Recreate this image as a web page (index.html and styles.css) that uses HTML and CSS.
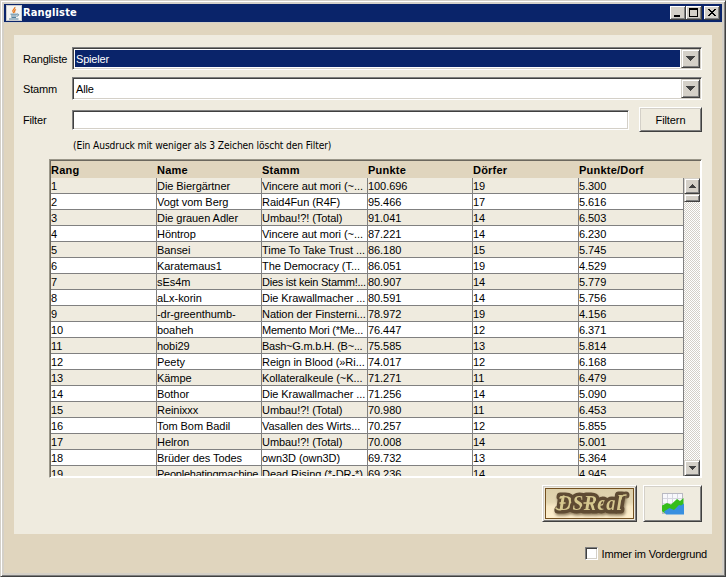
FILE: index.html
```html
<!DOCTYPE html>
<html lang="de">
<head>
<meta charset="utf-8">
<title>Rangliste</title>
<link rel="stylesheet" href="styles.css">
</head>
<body>
<div class="window">
  <header class="titlebar">
    <svg class="java" width="16" height="16" viewBox="0 0 16 16"><rect width="16" height="16" fill="#c9cacd"/><rect x="1" y="1" width="14" height="14" fill="#f4f4f2"/><path d="M8.800 2c.8 2-3 2.800-1.800 4.600L8 8M10 4.500C8.500 5.300 8 6 9 7.500" fill="none" stroke="#e87a22" stroke-width="1.300"/><path d="M4.500 9.200h6.500M5 11h5.500M5.500 12.500h4.500M3 14h9.500M11 9c2.500-.3 2 2-.3 2.200" fill="none" stroke="#52809d"/></svg>
    <h1>Rangliste</h1>
    <div class="controls">
      <button class="ctl"><svg width="16" height="14" shape-rendering="crispEdges"><path d="M4 9h6v2H4z"/></svg></button><button class="ctl"><svg width="16" height="14" shape-rendering="crispEdges"><path d="M3 2h9v9H3zM4 4v6h7V4z" fill-rule="evenodd"/></svg></button><button class="ctl close"><svg width="16" height="14" shape-rendering="crispEdges"><path d="M4 3h2v1h1v1h2V4h1V3h2v1h-1v1h-1v1H9v1h1v1h1v1h1v1h-2V9H9V8H7v1H6v1H4V9h1V8h1V7h1V6H6V5H5V4H4z"/></svg></button>
    </div>
  </header>
  <main class="client">
    <section class="panel">
      <div class="row row-type"><label>Rangliste</label><div class="combo focused"><span>Spieler</span><button class="drop"><svg width="9" height="5" shape-rendering="crispEdges"><path d="M0 0h9v1H8v1H7v1H6v1H5v1H4V4H3V3H2V2H1V1H0z"/></svg></button></div></div>
      <div class="row row-tribe"><label>Stamm</label><div class="combo"><span>Alle</span><button class="drop"><svg width="9" height="5" shape-rendering="crispEdges"><path d="M0 0h9v1H8v1H7v1H6v1H5v1H4V4H3V3H2V2H1V1H0z"/></svg></button></div></div>
      <div class="row row-filter"><label>Filter</label><div class="field"></div><button class="btn filter">Filtern</button></div>
      <p class="hint">(Ein Ausdruck mit weniger als 3 Zeichen löscht den Filter)</p>
      <div class="scrollpane">
        <div class="thead"><b>Rang</b><b>Name</b><b>Stamm</b><b>Punkte</b><b>Dörfer</b><b>Punkte/Dorf</b></div>
        <div class="view">
          <div class="rows">
            <div class="tr"><span>1</span><span>Die Biergärtner</span><span>Vincere aut mori (~...</span><span>100.696</span><span>19</span><span>5.300</span></div>
            <div class="tr"><span>2</span><span>Vogt vom Berg</span><span>Raid4Fun (R4F)</span><span>95.466</span><span>17</span><span>5.616</span></div>
            <div class="tr"><span>3</span><span>Die grauen Adler</span><span>Umbau!?! (Total)</span><span>91.041</span><span>14</span><span>6.503</span></div>
            <div class="tr"><span>4</span><span>Höntrop</span><span>Vincere aut mori (~...</span><span>87.221</span><span>14</span><span>6.230</span></div>
            <div class="tr"><span>5</span><span>Bansei</span><span>Time To Take Trust ...</span><span>86.180</span><span>15</span><span>5.745</span></div>
            <div class="tr"><span>6</span><span>Karatemaus1</span><span>The Democracy (T...</span><span>86.051</span><span>19</span><span>4.529</span></div>
            <div class="tr"><span>7</span><span>sEs4m</span><span class="tight">Dies ist kein Stamm!...</span><span>80.907</span><span>14</span><span>5.779</span></div>
            <div class="tr"><span>8</span><span>aLx-korin</span><span>Die Krawallmacher ...</span><span>80.591</span><span>14</span><span>5.756</span></div>
            <div class="tr"><span>9</span><span>-dr-greenthumb-</span><span>Nation der Finsterni...</span><span>78.972</span><span>19</span><span>4.156</span></div>
            <div class="tr"><span>10</span><span>boaheh</span><span class="tight">Memento Mori (*Me...</span><span>76.447</span><span>12</span><span>6.371</span></div>
            <div class="tr"><span>11</span><span>hobi29</span><span class="tight">Bash~G.m.b.H. (B~...</span><span>75.585</span><span>13</span><span>5.814</span></div>
            <div class="tr"><span>12</span><span>Peety</span><span>Reign in Blood (»Ri...</span><span>74.017</span><span>12</span><span>6.168</span></div>
            <div class="tr"><span>13</span><span>Kämpe</span><span>Kollateralkeule (~K...</span><span>71.271</span><span>11</span><span>6.479</span></div>
            <div class="tr"><span>14</span><span>Bothor</span><span>Die Krawallmacher ...</span><span>71.256</span><span>14</span><span>5.090</span></div>
            <div class="tr"><span>15</span><span>Reinixxx</span><span>Umbau!?! (Total)</span><span>70.980</span><span>11</span><span>6.453</span></div>
            <div class="tr"><span>16</span><span>Tom Bom Badil</span><span>Vasallen des Wirts...</span><span>70.257</span><span>12</span><span>5.855</span></div>
            <div class="tr"><span>17</span><span>Helron</span><span>Umbau!?! (Total)</span><span>70.008</span><span>14</span><span>5.001</span></div>
            <div class="tr"><span>18</span><span>Brüder des Todes</span><span>own3D (own3D)</span><span>69.732</span><span>13</span><span>5.364</span></div>
            <div class="tr"><span>19</span><span class="tight">Peoplehatingmachine</span><span>Dead Rising (*-DR-*)</span><span>69.236</span><span>14</span><span>4.945</span></div>
          </div>
          <div class="scrollbar">
            <button class="arrow up"><svg width="7" height="4" shape-rendering="crispEdges"><path d="M3 0h1v1h1v1h1v1h1v1H0V3h1V2h1V1h1z"/></svg></button>
            <div class="thumb"></div>
            <button class="arrow down"><svg width="7" height="4" shape-rendering="crispEdges"><path d="M0 0h7v1H6v1H5v1H4v1H3V3H2V2H1V1H0z"/></svg></button>
          </div>
        </div>
      </div>
      <div class="actions">
        <button class="btn logo"><svg width="89" height="31" viewBox="0 0 89 31"><defs><linearGradient id="sand" x2="0" y2="1"><stop offset="0" stop-color="#dccfaa"/><stop offset=".45" stop-color="#e4d7b3"/><stop offset=".6" stop-color="#f7e8c5"/><stop offset="1" stop-color="#fff0cf"/></linearGradient></defs><rect x=".5" y=".5" width="88" height="30" fill="url(#sand)" stroke="#74501f"/><path d="M76 11q0-4 5-4" class="swash"/><text class="mark" x="13" y="22" textLength="64" lengthAdjust="spacing">DSReal</text><path d="M76 11q0-4 5-4M11 20q2 3 6 1M15 10l4-2M15 15h5M39 15h8" class="stroke"/></svg></button>
        <button class="btn chart"><svg width="22" height="22" viewBox="0 0 22 22"><rect x=".5" y=".5" width="20" height="20" fill="#f8f8fc" stroke="#b9b9c2"/><path d="M5.500 1v19M10.500 1v19M15.500 1v19M1 5.500h19M1 10.500h19" stroke="#d6d6e0"/><path d="M0 12.500l5-2.500 4 1.500L15 6l3 2 3.500-3v10L2 20l-2-2z" fill="#35bd1b"/><path d="M2 18.500L7.500 15l4.500 2 5-5 2 .5 3-2v11H4z" fill="#388fe0"/></svg></button>
      </div>
    </section>
    <label class="ontop"><i class="check"></i><span>Immer im Vordergrund</span></label>
  </main>
</div>
</body>
</html>
```
FILE: styles.css
```css
* { box-sizing: border-box; }
body { margin: 0; font: 11px/14px "Liberation Sans", Arial, sans-serif; color: #000; }
button { padding: 0; margin: 0; font: inherit; color: inherit; border-radius: 0; }
svg { display: block; }

.window {
  width: 726px; height: 577px; background: #d4d0c8; padding: 3px;
  border: 1px solid; border-color: #d4d0c8 #404040 #404040 #d4d0c8;
  box-shadow: inset 1px 1px #fff, inset -1px -1px #808080;
}
.titlebar { height: 18px; background: #0a246a; display: flex; align-items: center; padding: 0 2px; }
h1 { margin: 0 0 0 1px; font: bold 11px/16px "DejaVu Sans Condensed", "DejaVu Sans", sans-serif; color: #fff; flex: 1; letter-spacing: .15px; }
.controls { display: flex; }
.ctl {
  width: 16px; height: 14px; background: #d4d0c8; border: 0; overflow: hidden;
  box-shadow: inset -1px -1px #404040, inset 1px 1px #fff, inset -2px -2px #808080;
}
.close { margin-left: 2px; }

.client { height: 550px; margin-top: 1px; background: #e0d5be; padding: 12px 10px 0; }
.panel { height: 499px; background: #efebdf; padding: 12px 10px 0 9px; }

.row { display: flex; align-items: center; }
.row label { width: 49px; flex: none; white-space: nowrap; letter-spacing: -.18px; }
.row-type { height: 23px; }
.row-tribe { height: 23px; margin-top: 7px; }
.row-filter { height: 25px; margin-top: 7px; }

.combo, .field {
  border: 1px solid; border-color: #808080 #fff #fff #808080;
  box-shadow: inset 1px 1px #404040, inset -1px -1px #d4d0c8;
  background: #fff;
}
.combo { width: 630px; height: 23px; display: flex; align-items: center; padding: 1px; }
.combo span { flex: 1; height: 17px; line-height: 19px; padding-left: 1px; margin: 0 1px; letter-spacing: -.18px; }
.focused span { background: #0a246a; color: #fff; }
.drop {
  width: 19px; height: 19px; display: flex; align-items: center; justify-content: center;
  background: #d4d0c8; border: 1px solid; border-color: #d4d0c8 #404040 #404040 #d4d0c8;
  box-shadow: inset 1px 1px #fff, inset -1px -1px #808080; fill: #404040;
}
.field { width: 557px; height: 20px; }
.btn {
  background: #efebdf; border: 1px solid; border-color: #fff #404040 #404040 #fff;
  box-shadow: inset 1px 1px #d4d0c8, inset -1px -1px #808080;
  display: flex; align-items: center; justify-content: center;
}
.filter { width: 63px; height: 25px; margin-left: 10px; letter-spacing: -.1px; }
.hint { margin: 6px 0 0 50px; font: 10.200px/15px "DejaVu Sans Condensed", "DejaVu Sans", sans-serif; white-space: nowrap; letter-spacing: -.11px; }

.scrollpane {
  width: 653px; height: 319px; margin: 6px 0 0 26px; padding: 1px;
  border: 1px solid; border-color: #9a9689 #fff #fff #9a9689;
  box-shadow: inset 1px 1px #6b675e, inset -1px -1px #fff;
}
.thead { height: 17px; background: #e0d5be; line-height: 18px; letter-spacing: .22px; }
.thead, .tr { display: grid; grid-template-columns: 106px 105px 106px 105px 106px 105px; }
.view { display: flex; height: 298px; overflow: hidden; }
.rows { width: 633px; height: 298px; overflow: hidden; }
.tr { height: 16px; background: #efebdf; }
.tr:nth-child(even) { background: #fff; }
.tr span {
  height: 16px; line-height: 17px; white-space: nowrap; overflow: hidden; letter-spacing: -.06px;
  border-right: 1px solid #808080; border-bottom: 1px solid #808080;
}
.tr .tight { letter-spacing: -.24px; }
.scrollbar {
  width: 16px; display: flex; flex-direction: column;
  background: repeating-conic-gradient(#fff 0 25%, #d4d0c8 0 50%) 0 0 / 2px 2px;
}
.arrow, .thumb {
  width: 16px; height: 16px; background: #d4d0c8; border: 1px solid;
  border-color: #d4d0c8 #404040 #404040 #d4d0c8;
  box-shadow: inset 1px 1px #fff, inset -1px -1px #808080;
}
.arrow { display: flex; align-items: center; justify-content: center; fill: #404040; flex: none; }
.thumb { height: 8px; }
.down { margin-top: auto; }

.actions { display: flex; justify-content: flex-end; gap: 6px; margin-top: 7px; }
.logo { width: 95px; height: 37px; }
.chart { width: 59px; height: 37px; }
.mark {
  font: italic bold 20px "Liberation Serif", serif; fill: #d6c88f;
  stroke: #5f4b33; stroke-width: 7px; stroke-linejoin: round; paint-order: stroke;
  filter: drop-shadow(1px 2px 1.500px #8a7758);
}
.swash { fill: none; stroke: #5f4b33; stroke-width: 7px; stroke-linecap: round; }
.stroke { fill: none; stroke: #d6c88f; stroke-width: 1.500px; stroke-linecap: round; }

.ontop { display: flex; align-items: center; justify-content: flex-end; gap: 4px; margin: 12px 5px 0 0; height: 15px; letter-spacing: -.2px; }
.check {
  width: 13px; height: 13px; background: #fff; border: 1px solid; border-color: #808080 #fff #fff #808080;
  box-shadow: inset 1px 1px #404040, inset -1px -1px #d4d0c8;
}
```
